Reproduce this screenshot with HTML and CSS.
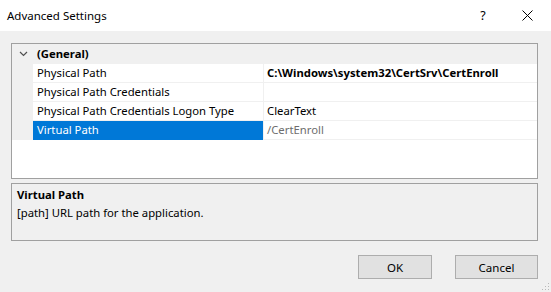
FILE: index.html
```html
<!DOCTYPE html>
<html lang="en">
<head>
    <meta charset="UTF-8">
    <title>Advanced Settings</title>
    <link rel="stylesheet" href="styles.css">
</head>
<body>

    <div class="dialog">

        <!-- Title Bar -->
        <div class="titlebar">
            <span class="title">Advanced Settings</span>
            <span class="help">?</span>
            <span class="close">
                <svg width="11" height="11" viewBox="0 0 11 11"><path d="M0.5 0.5 L10.5 10.5 M10.5 0.5 L0.5 10.5" stroke="#000" stroke-width="1" fill="none"/></svg>
            </span>
        </div>

        <div class="content">

            <!-- Property Grid -->
            <div class="grid">
                <div class="row category">
                    <div class="gutter">
                        <svg width="9" height="6" viewBox="0 0 9 6"><path d="M1 1 L4.5 4.5 L8 1" stroke="#505050" stroke-width="1.2" fill="none"/></svg>
                    </div>
                    <div class="cat-name">(General)</div>
                </div>
                <div class="row">
                    <div class="gutter"></div>
                    <div class="name">Physical Path</div>
                    <div class="value modified">C:\Windows\system32\CertSrv\CertEnroll</div>
                </div>
                <div class="row">
                    <div class="gutter"></div>
                    <div class="name">Physical Path Credentials</div>
                    <div class="value"></div>
                </div>
                <div class="row">
                    <div class="gutter"></div>
                    <div class="name">Physical Path Credentials Logon Type</div>
                    <div class="value">ClearText</div>
                </div>
                <div class="row selected">
                    <div class="gutter"></div>
                    <div class="name">Virtual Path</div>
                    <div class="value readonly">/CertEnroll</div>
                </div>
            </div>

            <!-- Description -->
            <div class="desc">
                <div class="desc-title">Virtual Path</div>
                <div class="desc-text">[path] URL path for the application.</div>
            </div>

            <!-- Buttons -->
            <div class="buttons">
                <button class="btn btn-ok">OK</button>
                <button class="btn btn-cancel">Cancel</button>
            </div>
        </div>

        <!-- Resize Grip -->
        <svg class="grip" width="10" height="10" viewBox="0 0 10 10">
            <rect x="8" y="2" width="1" height="1" fill="#b8b8b8"/>
            <rect x="5" y="5" width="1" height="1" fill="#b8b8b8"/>
            <rect x="8" y="5" width="1" height="1" fill="#b8b8b8"/>
            <rect x="2" y="8" width="1" height="1" fill="#b8b8b8"/>
            <rect x="5" y="8" width="1" height="1" fill="#b8b8b8"/>
            <rect x="8" y="8" width="1" height="1" fill="#b8b8b8"/>
        </svg>
    </div>

</body>
</html>
```

FILE: styles.css
```css
/* Global */
* {
    margin: 0;
    padding: 0;
    box-sizing: border-box;
}

body {
    font-family: "Segoe UI", "Noto Sans", sans-serif;
    font-size: 11.3px;
    color: #000;
    background: #f0f0f0;
}

.dialog {
    position: relative;
    width: 551px;
    height: 292px;
    background: #f0f0f0;
    overflow: hidden;
}

/* Title Bar */
.titlebar {
    display: flex;
    align-items: center;
    height: 31px;
    background: #fff;
    padding-left: 7px;
}

.title {
    flex: 1;
    font-size: 11.5px;
}

.help {
    width: 44px;
    text-align: center;
    font-size: 12.5px;
}

.close {
    display: flex;
    justify-content: center;
    width: 44px;
    margin-right: 2px;
}

/* Content */
.content {
    padding: 12px 13px 0 11px;
}

/* Property Grid */
.grid {
    height: 136px;
    background: #fff;
    border: 1px solid #a0a0a0;
}

.row {
    display: flex;
    height: 19px;
    line-height: 18px;
}

.gutter {
    width: 21px;
    background: #f0f0f0;
    display: flex;
    align-items: center;
    justify-content: center;
    padding-left: 1px;
}

.category {
    height: 20px;
    background: #f0f0f0;
}

.cat-name {
    font-weight: bold;
    padding-left: 4px;
    line-height: 20px;
}

.name {
    width: 230px;
    padding-left: 4px;
    border-bottom: 1px solid #f0f0f0;
    white-space: nowrap;
}

.value {
    flex: 1;
    border-left: 1px solid #f0f0f0;
    border-bottom: 1px solid #f0f0f0;
    padding-left: 3px;
    white-space: nowrap;
}

.value.modified {
    font-weight: bold;
}

.value.readonly {
    color: #6d6d6d;
}

.selected .name {
    background: #0078d7;
    color: #fff;
    border-bottom-color: #0078d7;
}

/* Description */
.desc {
    height: 58px;
    margin-top: 4px;
    border: 1px solid #a0a0a0;
    padding: 2px 5px;
}

.desc-title {
    font-weight: bold;
    line-height: 17px;
}

.desc-text {
    line-height: 20px;
}

/* Buttons */
.buttons {
    display: flex;
    justify-content: flex-end;
    gap: 23px;
    margin-top: 14px;
}

.btn {
    height: 24px;
    font-family: inherit;
    font-size: 11.5px;
    color: #000;
    background: #e1e1e1;
    border: 1px solid #adadad;
}

.btn-ok {
    width: 74px;
}

.btn-cancel {
    width: 83px;
}

.grip {
    position: absolute;
    right: 1px;
    bottom: 1px;
}
```
